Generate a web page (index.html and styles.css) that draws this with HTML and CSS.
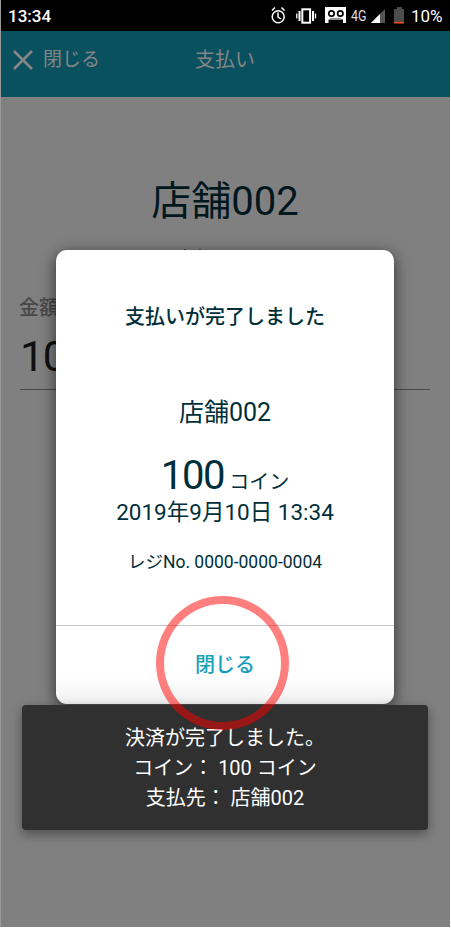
FILE: index.html
```html
<!DOCTYPE html>
<html lang="ja">
<head>
<meta charset="utf-8">
<title>支払い</title>
<link rel="stylesheet" href="styles.css">
</head>
<body>
<div class="screen">
  <div class="status">
    <span class="clock">13:34</span>
    <svg class="tray" width="148" height="31" viewBox="262 0 148 31">
      <g fill="none" stroke="#fff" stroke-width="1.5">
        <circle cx="278.2" cy="16.800" r="6"/>
        <path d="M278 12.500v4.500l3 2M272 10.500l3-3M284.500 10.500l-3-3"/>
        <rect x="302.300" y="9.300" width="7.800" height="13.400" stroke-width="2"/>
        <path d="M299.500 11v10M313 11v10" stroke-width="2"/>
        <path d="M296.800 13.500v5M315.500 13.500v5" stroke-width="1.300"/>
      </g>
      <path d="M325 7h21v16h-3v-3.500h-14.500V23H325z" fill="#fff"/>
      <path d="M330 17.800h11v1.700h-11z" fill="#999"/>
      <g fill="#fff" stroke="#000" stroke-width="1.700"><circle cx="331.500" cy="13.500" r="2.700"/><circle cx="340.300" cy="13.500" r="2.700"/></g>
      <path d="M385 9v14h-14z" fill="#555"/><path d="M380 14v9h-9z" fill="#fff"/>
      <path d="M397 7h5v2h2v13h-10V9h3z" fill="#4c4c4c"/><path d="M394 22h10v1.500h-10z" fill="#ff4b21"/>
      <text class="network" x="351" y="21" textLength="15.500" lengthAdjust="spacingAndGlyphs">4G</text>
    </svg>
    <span class="percent">10%</span>
  </div>
  <header class="bar">
    <svg class="cross" width="22" height="22" viewBox="0 0 22 22"><path d="M2 2l18 18M20 2L2 20" fill="none" stroke="#858585" stroke-width="2.600"/></svg>
    <span class="back">閉じる</span>
    <span class="title">支払い</span>
  </header>
  <main class="content">
    <h1 class="shop">店舗002</h1>
    <p class="hint">にお支払いをします</p>
    <div class="label">金額</div>
    <div class="amount">100</div>
  </main>
  <section class="dialog">
    <div class="message">支払いが完了しました</div>
    <div class="store">店舗002</div>
    <div class="paid"><span class="number">100</span> コイン</div>
    <div class="date">2019年9月10日 13:34</div>
    <div class="register">レジNo. 0000-0000-0004</div>
    <div class="close">閉じる</div>
  </section>
  <aside class="toast">
    <div class="line">決済が完了しました。</div>
    <div class="line">コイン： 100 コイン</div>
    <div class="line">支払先： 店舗002</div>
  </aside>
  <div class="ring"></div>
</div>
</body>
</html>
```
FILE: styles.css
```css
* { box-sizing: border-box; }
body { margin: 0; background: #fff; font-family: Roboto, "Noto Sans CJK JP", sans-serif; }
.screen { position: relative; width: 450px; height: 927px; background: #808080; overflow: hidden; border-left: 1px solid #999; }
.status { height: 31px; background: #000; color: #fff; margin-left: -1px; display: flex; align-items: center; font-size: 17px; line-height: 31px; padding: 1px 0 0 8px; }
.clock { font-weight: 500; width: 254px; }
.tray { flex: none; margin-top: -1px; }
.network { font-size: 15px; fill: #ddd; }
.percent { padding-left: 1px; white-space: nowrap; }
.bar { height: 66px; background: #0a515f; color: #858585; display: flex; align-items: flex-start; padding: 17px 0 0 11px; font-size: 20px; line-height: 22px; }
.cross { margin-top: 1px; }
.back { margin-left: 9px; width: 152px; font-size: 19px; margin-top: 1px; }
.title { margin-top: 1px; }
.content { padding: 75px 20px 0 19px; }
.shop { margin: 0; font-size: 40px; line-height: 60px; font-weight: 400; color: #00171e; text-align: center; }
.hint { margin: 13px 0 0; text-align: center; font-size: 20px; line-height: 30px; color: #00171e; }
.label { margin: 18px 0 0 -1px; font-size: 20px; line-height: 30px; font-weight: 500; color: #484848; }
.amount { height: 67px; font-size: 43px; letter-spacing: -1.5px; line-height: 67px; color: #101010; border-bottom: 1px solid #4a4a4a; }
.dialog { position: absolute; left: 55px; top: 250px; width: 338px; height: 454px; background: linear-gradient(#fff 94%, #f0f0f0); border-radius: 11px; box-shadow: 0 4px 16px rgba(0,0,0,.65); color: #002f3a; text-align: center; padding-top: 52px; }
.message { font-size: 20px; line-height: 30px; font-weight: 500; }
.store { margin-top: 61px; font-size: 25px; line-height: 40px; }
.paid { margin-top: 18px; font-size: 20px; line-height: 50px; height: 48px; }
.number { font-size: 40px; letter-spacing: -1.3px; }
.date { font-size: 22.5px; line-height: 26px; }
.register { margin-top: 23px; font-size: 17.5px; line-height: 28px; }
.close { margin-top: 49px; padding-top: 1px; height: 79px; border-top: 1px solid #c5c5c5; font-size: 20px; line-height: 76px; font-weight: 500; color: #159fbd; }
.toast { position: absolute; left: 21px; top: 705px; width: 406px; height: 125px; padding-top: 18px; background: #303030; border-radius: 4px; box-shadow: 0 4px 12px rgba(0,0,0,.4); color: #fff; text-align: center; }
.line { font-size: 20px; line-height: 30px; }
.ring { position: absolute; left: 155px; top: 596px; width: 133px; height: 134px; border: 8px solid rgba(255,0,0,.5); border-radius: 50%; }
```
